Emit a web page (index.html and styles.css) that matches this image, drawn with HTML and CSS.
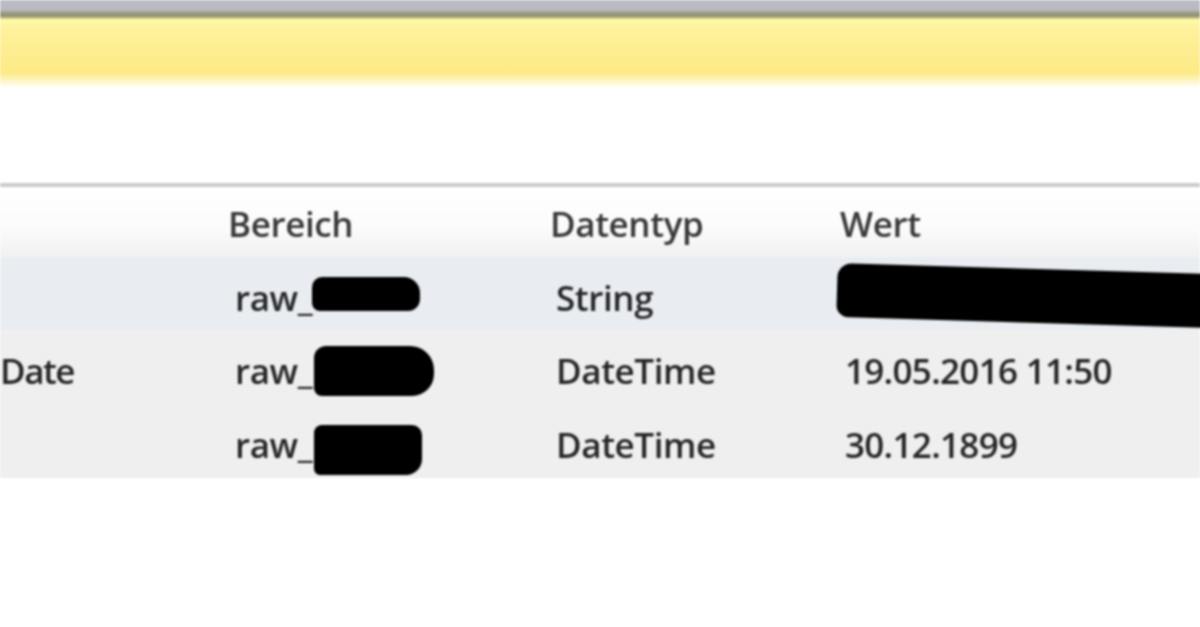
FILE: index.html
```html
<!DOCTYPE html>
<html lang="de">
<head>
<meta charset="utf-8">
<title>Variablen</title>
<link rel="stylesheet" href="styles.css">
</head>
<body>
<div class="screen">
  <div class="titlebar"></div>
  <div class="infobar"></div>
  <div class="toolbar"></div>
  <div class="grid">
    <div class="row head">
      <div class="cell name"></div>
      <div class="cell area">Bereich</div>
      <div class="cell type">Datentyp</div>
      <div class="cell value">Wert</div>
    </div>
    <div class="row sel">
      <div class="cell name"></div>
      <div class="cell area">raw_<span class="mark m1"></span></div>
      <div class="cell type">String</div>
      <div class="cell value"><span class="mark mw"></span></div>
    </div>
    <div class="row">
      <div class="cell name">Date</div>
      <div class="cell area">raw_<span class="mark m2"></span></div>
      <div class="cell type">DateTime</div>
      <div class="cell value">19.05.2016 11:50</div>
    </div>
    <div class="row last">
      <div class="cell name"></div>
      <div class="cell area">raw_<span class="mark m3"></span></div>
      <div class="cell type">DateTime</div>
      <div class="cell value">30.12.1899</div>
    </div>
  </div>
</div>
</body>
</html>
```

FILE: styles.css
```css
* { box-sizing: border-box; }
html, body { margin: 0; padding: 0; background: #fff; }
body { width: 1200px; height: 627px; overflow: hidden; }

.screen {
  width: 1200px;
  height: 627px;
  font-family: "Open Sans", "Noto Sans", sans-serif;
  color: #262626;
  filter: blur(1.1px);
  display: flex;
  flex-direction: column;
}

.titlebar {
  height: 19px;
  background: linear-gradient(#bdbdc6 0, #b9b9c1 10px, #9c9c86 13px, #8e8e6c 16px, #e4df9a 19px);
}

.infobar {
  height: 68px;
  background: linear-gradient(#fffaa8 0, #fdf39c 8px, #fdee93 28px, #fdeb86 54px, #fef6c6 62px, #fffef6 68px);
}

.toolbar {
  height: 100px;
  background: #fff;
  border-bottom: 4px solid #cbcbcb;
}

.grid {
  display: flex;
  flex-direction: column;
}

.row {
  display: grid;
  grid-template-columns: 226px 318px 288px 1fr;
  height: 73px;
  align-items: center;
  font-size: 35px;
  font-weight: 600;
  background: #efefef;
  letter-spacing: -0.4px;
}

.row.head {
  height: 70px;
  background: linear-gradient(#ffffff, #fbfbfb 60%, #f1f1f1);
  color: #383838;
}

.row.sel {
  background: #e9edf2;
}

.row.last { height: 75px; }

.cell {
  white-space: nowrap;
  display: flex;
  align-items: center;
  padding-top: 8px;
}

.row.head .cell { padding-top: 2px; }

.row .area { padding-left: 9px; }
.row .type { padding-left: 12px; }
.row .value { padding-left: 13px; letter-spacing: -0.7px; }
.row.head .area { padding-left: 2px; }
.row.head .type { padding-left: 6px; }
.row.head .value { padding-left: 8px; letter-spacing: -0.4px; }

.name { padding-left: 0; letter-spacing: -1.5px; }

.mark {
  display: inline-block;
  background: #000;
}

.m1 { width: 108px; height: 34px; border-radius: 10px 16px 12px 8px; margin-left: 0; margin-top: -8px; }
.m2 { width: 120px; height: 50px; border-radius: 12px 24px 22px 8px; margin-left: 2px; margin-top: 0; }
.m3 { width: 108px; height: 50px; border-radius: 8px 10px 16px 6px; margin-left: 2px; margin-top: 10px; }

.mw {
  width: 372px;
  height: 54px;
  margin-left: -8px;
  margin-top: -16px;
  border-radius: 14px 6px 6px 12px;
  transform: rotate(1.7deg);
  transform-origin: left center;
}
```
